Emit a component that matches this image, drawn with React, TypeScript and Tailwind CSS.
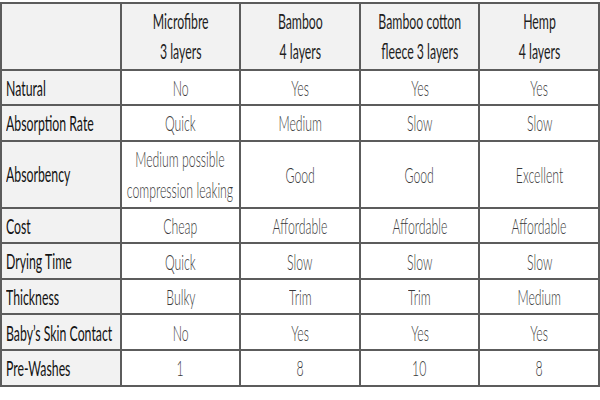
import React from "react";

const cols = ["Microfibre\n3 layers", "Bamboo\n4 layers", "Bamboo cotton\nfleece 3 layers", "Hemp\n4 layers"];

const rows: { label: string; vals: string[]; tall?: boolean }[] = [
  { label: "Natural", vals: ["No", "Yes", "Yes", "Yes"] },
  { label: "Absorption Rate", vals: ["Quick", "Medium", "Slow", "Slow"] },
  { label: "Absorbency", vals: ["Medium possible\ncompression leaking", "Good", "Good", "Excellent"], tall: true },
  { label: "Cost", vals: ["Cheap", "Affordable", "Affordable", "Affordable"] },
  { label: "Drying Time", vals: ["Quick", "Slow", "Slow", "Slow"] },
  { label: "Thickness", vals: ["Bulky", "Trim", "Trim", "Medium"] },
  { label: "Baby\u2019s Skin Contact", vals: ["No", "Yes", "Yes", "Yes"] },
  { label: "Pre-Washes", vals: ["1", "8", "10", "8"] },
];

function Lines({ text }: { text: string }) {
  const parts = text.split("\n");
  return (
    <>
      {parts.map((p, i) => (
        <React.Fragment key={i}>
          {i > 0 && <br />}
          {p}
        </React.Fragment>
      ))}
    </>
  );
}

function Center({ text, light }: { text: string; light?: boolean }) {
  return (
    <div className="flex justify-center">
      <span
        className={
          "inline-block whitespace-nowrap text-center scale-x-[0.585] origin-center " +
          (light ? "font-light text-[#3a3a3a] leading-[31px]" : "font-normal text-[#1e1e1e] leading-[30px]")
        }
      >
        <Lines text={text} />
      </span>
    </div>
  );
}

export default function App() {
  return (
    <div className="w-[600px] h-[400px] bg-white pt-[2px]" style={{ fontFamily: "Lato, 'Open Sans', sans-serif" }}>
      <table className="table-fixed border-collapse w-[598px] text-[21px]">
        <colgroup>
          <col className="w-[119.6px]" />
          <col className="w-[119.6px]" />
          <col className="w-[119.6px]" />
          <col className="w-[119.6px]" />
          <col className="w-[119.6px]" />
        </colgroup>
        <tbody>
          <tr className="h-[66.5px]">
            <td className="border-2 border-[#5c5c5c] bg-[#f2f2f2]"></td>
            {cols.map((c) => (
              <td key={c} className="border-2 border-[#5c5c5c] bg-[#f2f2f2] p-0 align-middle">
                <Center text={c} />
              </td>
            ))}
          </tr>
          {rows.map((r) => (
            <tr key={r.label} className={r.tall ? "h-[67px]" : "h-[35.6px]"}>
              <td className="border-2 border-[#5c5c5c] bg-[#f2f2f2] p-0 pl-[4px] align-middle">
                <span className="inline-block whitespace-nowrap scale-x-[0.585] origin-left text-[#141414] font-normal leading-[30px]">
                  {r.label}
                </span>
              </td>
              {r.vals.map((v, i) => (
                <td key={i} className="border-2 border-[#5c5c5c] bg-white p-0 align-middle">
                  <Center text={v} light />
                </td>
              ))}
            </tr>
          ))}
        </tbody>
      </table>
    </div>
  );
}
